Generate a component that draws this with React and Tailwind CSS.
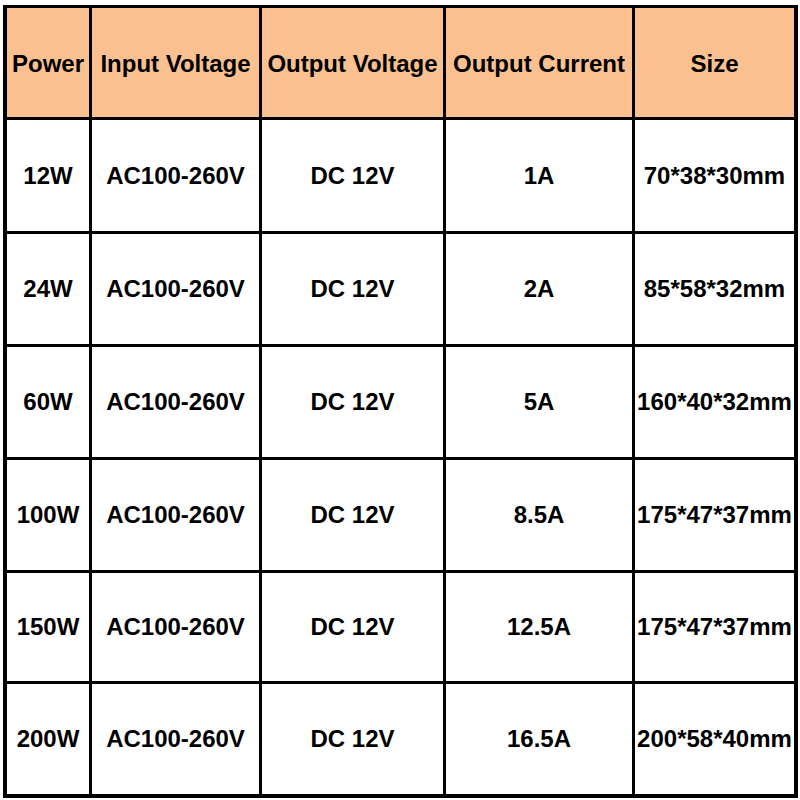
export default function App() {
  const header = ["Power", "Input Voltage", "Output Voltage", "Output Current", "Size"];
  const rows = [
    ["12W", "AC100-260V", "DC 12V", "1A", "70*38*30mm"],
    ["24W", "AC100-260V", "DC 12V", "2A", "85*58*32mm"],
    ["60W", "AC100-260V", "DC 12V", "5A", "160*40*32mm"],
    ["100W", "AC100-260V", "DC 12V", "8.5A", "175*47*37mm"],
    ["150W", "AC100-260V", "DC 12V", "12.5A", "175*47*37mm"],
    ["200W", "AC100-260V", "DC 12V", "16.5A", "200*58*40mm"],
  ];
  return (
    <div className="w-[800px] h-[800px] bg-white pt-[5px] pl-[3px]" style={{ fontFamily: '"Liberation Sans", Arial, sans-serif' }}>
      <div className="w-[795px] h-[793px] bg-black pt-[3px] pl-[4px] pr-[4px] pb-[4px] grid gap-[3px] grid-cols-[82px_167px_181px_186px_159px] grid-rows-[109px_111px_110px_110px_110px_108px_110px]">
        {header.map((h) => (
          <div key={h} className="bg-[#fac090] flex items-center justify-center pt-[3px] text-[24px] font-bold text-black whitespace-nowrap leading-none">
            {h}
          </div>
        ))}
        {rows.map((r, i) =>
          r.map((c, j) => (
            <div key={i + "-" + j} className="bg-white flex items-center justify-center text-[24px] font-bold text-black whitespace-nowrap leading-none">
              {c}
            </div>
          ))
        )}
      </div>
    </div>
  );
}
